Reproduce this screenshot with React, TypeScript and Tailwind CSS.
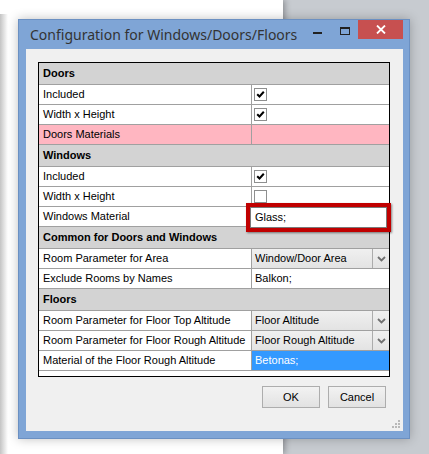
import React from "react";

const Check = ({ checked }: { checked: boolean }) => (
  <div className="w-[13px] h-[13px] border border-[#8e8f8f] bg-white flex items-center justify-center">
    {checked && (
      <svg width="9" height="9" viewBox="0 0 9 9">
        <path d="M1.2 4.2 L3.5 6.5 L7.8 1.8" stroke="#000" strokeWidth="2" fill="none" />
      </svg>
    )}
  </div>
);

const Chevron = () => (
  <svg width="9" height="6" viewBox="0 0 9 6">
    <path d="M1 1 L4.5 4.5 L8 1" stroke="#707070" strokeWidth="1.8" fill="none" />
  </svg>
);

const Header = ({ text }: { text: string }) => (
  <div className="h-[22px] border-b border-[#a0a0a0] bg-[#d3d3d3] flex items-center pl-[4px] font-bold">
    {text}
  </div>
);

const Row = ({
  label,
  children,
  bg = "bg-white",
  rightBg,
}: {
  label: string;
  children?: React.ReactNode;
  bg?: string;
  rightBg?: string;
}) => (
  <div className={`h-[20px] border-b border-[#a0a0a0] flex ${bg}`}>
    <div className="w-[213px] border-r border-[#a0a0a0] flex items-center pl-[4px] whitespace-nowrap overflow-hidden">
      {label}
    </div>
    <div className={`flex-1 flex items-center ${rightBg ?? ""}`}>{children}</div>
  </div>
);

const CheckCell = ({ checked }: { checked: boolean }) => (
  <div className="pl-[2px] flex items-center">
    <Check checked={checked} />
  </div>
);

const Combo = ({ text }: { text: string }) => (
  <div className="w-full h-full flex bg-gradient-to-b from-[#f0f0f0] to-[#e3e3e3]">
    <div className="flex-1 flex items-center pl-[3px] whitespace-nowrap">{text}</div>
    <div className="w-[17px] border-l border-[#acacac] flex items-center justify-center">
      <Chevron />
    </div>
  </div>
);

const TextCell = ({ text }: { text: string }) => (
  <div className="pl-[3px] whitespace-nowrap">{text}</div>
);

export default function App() {
  return (
    <div
      className="relative w-[429px] h-[454px] overflow-hidden bg-[#c7cbd0]"
      style={{ fontFamily: '"Liberation Sans", Arial, sans-serif' }}
    >
      {/* background window */}
      <div className="absolute left-0 top-0 w-[283px] h-[454px] bg-white shadow-[2px_0_6px_rgba(0,0,0,0.3)]" />
      <div className="absolute left-0 top-[14px] w-[8px] h-[440px] bg-gradient-to-r from-[#c4c4c4] to-transparent" />

      {/* dialog */}
      <div className="absolute left-[18px] top-[19px] w-[392px] h-[420px] border border-[#6b90c2] bg-[#7fa5d6] flex flex-col shadow-[0_0_10px_rgba(0,0,0,0.25)]">
        {/* title bar */}
        <div className="h-[29px] flex items-start">
          <div
            className="flex-1 min-w-0 pl-[11px] pt-[5px] text-[14px] leading-[20px] text-[#333333] whitespace-nowrap"
            style={{ fontFamily: '"Segoe UI", "Noto Sans", sans-serif' }}
          >
            Configuration for Windows/Doors/Floors
          </div>
          <div className="flex pr-[6px] h-[19px] shrink-0">
            <div className="w-[27px] h-[19px] flex items-center justify-center pt-[6px]">
              <div className="w-[9px] h-[2px] bg-[#222]" />
            </div>
            <div className="w-[27px] h-[19px] flex items-center justify-center pt-[3px]">
              <div className="w-[10px] h-[8px] border border-[#222] border-t-2" />
            </div>
            <div className="w-[45px] h-[19px] bg-[#c75050] flex items-center justify-center">
              <svg width="10" height="9" viewBox="0 0 10 9">
                <path d="M1 0.5 L9 8.5 M9 0.5 L1 8.5" stroke="#fff" strokeWidth="1.8" />
              </svg>
            </div>
          </div>
        </div>

        {/* client area */}
        <div className="relative ml-[7px] mr-[6px] h-[382px] bg-[#f0f0f0] pt-[13px] pl-[12px] text-[11px] text-black">
          {/* grid */}
          <div className="relative w-[352px] h-[315px] border border-black bg-white">
            <Header text="Doors" />
            <Row label="Included">
              <CheckCell checked />
            </Row>
            <Row label="Width x Height">
              <CheckCell checked />
            </Row>
            <Row label="Doors Materials" bg="bg-[#ffb6c1]" />
            <Header text="Windows" />
            <Row label="Included">
              <CheckCell checked />
            </Row>
            <Row label="Width x Height">
              <CheckCell checked={false} />
            </Row>
            <Row label="Windows Material">
              <TextCell text="Glass;" />
            </Row>
            <Header text="Common for Doors and Windows" />
            <Row label="Room Parameter for Area">
              <Combo text="Window/Door Area" />
            </Row>
            <Row label="Exclude Rooms by Names">
              <TextCell text="Balkon;" />
            </Row>
            <Header text="Floors" />
            <Row label="Room Parameter for Floor Top Altitude">
              <Combo text="Floor Altitude" />
            </Row>
            <Row label="Room Parameter for Floor Rough Altitude">
              <Combo text="Floor Rough Altitude" />
            </Row>
            <Row label="Material of the Floor Rough Altitude" rightBg="bg-[#3399ff] text-white">
              <TextCell text="Betonas;" />
            </Row>

            {/* red highlight over the Glass cell */}
            <div className="absolute left-[207px] top-[140px] w-[145px] h-[29px] border-[4px] border-[#c00000] shadow-[1px_1px_2px_rgba(0,0,0,0.45)] bg-white flex items-center">
              <div className="w-full h-full border border-[#7a7a7a] flex items-center pl-[4px]">Glass;</div>
            </div>
          </div>

          {/* buttons */}
          <div className="flex justify-end gap-[8px] mt-[9px] pr-[17px]">
            <button className="w-[58px] h-[22px] border border-[#adadad] bg-gradient-to-b from-[#f2f2f2] to-[#e2e2e2] text-[11px] text-black flex items-center justify-center">
              OK
            </button>
            <button className="w-[58px] h-[22px] border border-[#adadad] bg-gradient-to-b from-[#f2f2f2] to-[#e2e2e2] text-[11px] text-black flex items-center justify-center">
              Cancel
            </button>
          </div>

          {/* resize grip */}
          <svg className="absolute right-[2px] bottom-[2px]" width="9" height="9" viewBox="0 0 9 9">
            <rect x="6" y="0" width="2" height="2" fill="#b8b8b8" />
            <rect x="3" y="3" width="2" height="2" fill="#b8b8b8" />
            <rect x="6" y="3" width="2" height="2" fill="#b8b8b8" />
            <rect x="0" y="6" width="2" height="2" fill="#b8b8b8" />
            <rect x="3" y="6" width="2" height="2" fill="#b8b8b8" />
            <rect x="6" y="6" width="2" height="2" fill="#b8b8b8" />
          </svg>
        </div>
      </div>
    </div>
  );
}
